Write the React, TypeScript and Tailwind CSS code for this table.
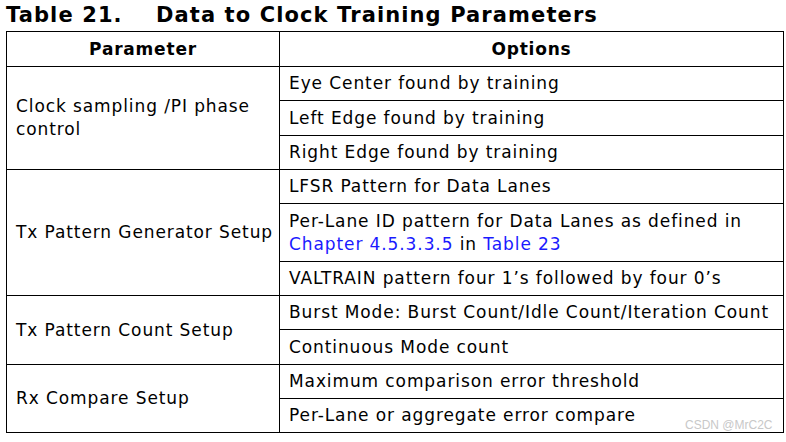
const FONT = { fontFamily: '"DejaVu Sans", Verdana, sans-serif' };

type Group = { param: React.ReactNode; options: { text: React.ReactNode; h: number }[] };

const groups: Group[] = [
  {
    param: (
      <>
        Clock sampling /PI phase
        <br />
        control
      </>
    ),
    options: [
      { text: "Eye Center found by training", h: 34 },
      { text: "Left Edge found by training", h: 35 },
      { text: "Right Edge found by training", h: 34 },
    ],
  },
  {
    param: "Tx Pattern Generator Setup",
    options: [
      { text: "LFSR Pattern for Data Lanes", h: 34 },
      {
        text: (
          <>
            Per-Lane ID pattern for Data Lanes as defined in
            <br />
            <span className="text-[#1a1aff]">Chapter 4.5.3.3.5</span> in{" "}
            <span className="text-[#1a1aff]">Table 23</span>
          </>
        ),
        h: 58,
      },
      { text: "VALTRAIN pattern four 1\u2019s followed by four 0\u2019s", h: 34 },
    ],
  },
  {
    param: "Tx Pattern Count Setup",
    options: [
      { text: "Burst Mode: Burst Count/Idle Count/Iteration Count", h: 34 },
      { text: "Continuous Mode count", h: 35 },
    ],
  },
  {
    param: "Rx Compare Setup",
    options: [
      { text: "Maximum comparison error threshold", h: 34 },
      { text: "Per-Lane or aggregate error compare", h: 34 },
    ],
  },
];

export default function App() {
  return (
    <div className="relative w-[786px] h-[442px] bg-white text-black" style={FONT}>
      <div className="flex pl-[6px] pt-[1px] h-[31px] text-[21px] font-bold leading-[28px] tracking-[1.1px]">
        <span className="w-[150px]">Table 21.</span>
        <span>Data to Clock Training Parameters</span>
      </div>
      <table className="ml-[6px] border-collapse text-[17px] leading-[23px] tracking-[0.9px] table-fixed w-[778px]">
        <colgroup>
          <col className="w-[273px]" />
          <col />
        </colgroup>
        <thead>
          <tr className="h-[35px]">
            <th className="border border-black font-bold text-center tracking-[0.8px]">Parameter</th>
            <th className="border border-black font-bold text-center tracking-[0.8px]">Options</th>
          </tr>
        </thead>
        <tbody>
          {groups.map((g, gi) =>
            g.options.map((o, i) => (
              <tr key={`${gi}-${i}`} style={{ height: o.h }}>
                {i === 0 && (
                  <td rowSpan={g.options.length} className="border border-black pl-[9px] pr-[2px] align-middle">
                    {g.param}
                  </td>
                )}
                <td className="border border-black pl-[9px] pr-[2px] align-middle whitespace-nowrap">{o.text}</td>
              </tr>
            ))
          )}
        </tbody>
      </table>
      <div
        className="absolute left-[685px] top-[418px] text-[12px] leading-[14px] text-[#c8c8c8]"
        style={{ fontFamily: '"Liberation Sans", Arial, sans-serif' }}
      >
        CSDN @MrC2C
      </div>
    </div>
  );
}
